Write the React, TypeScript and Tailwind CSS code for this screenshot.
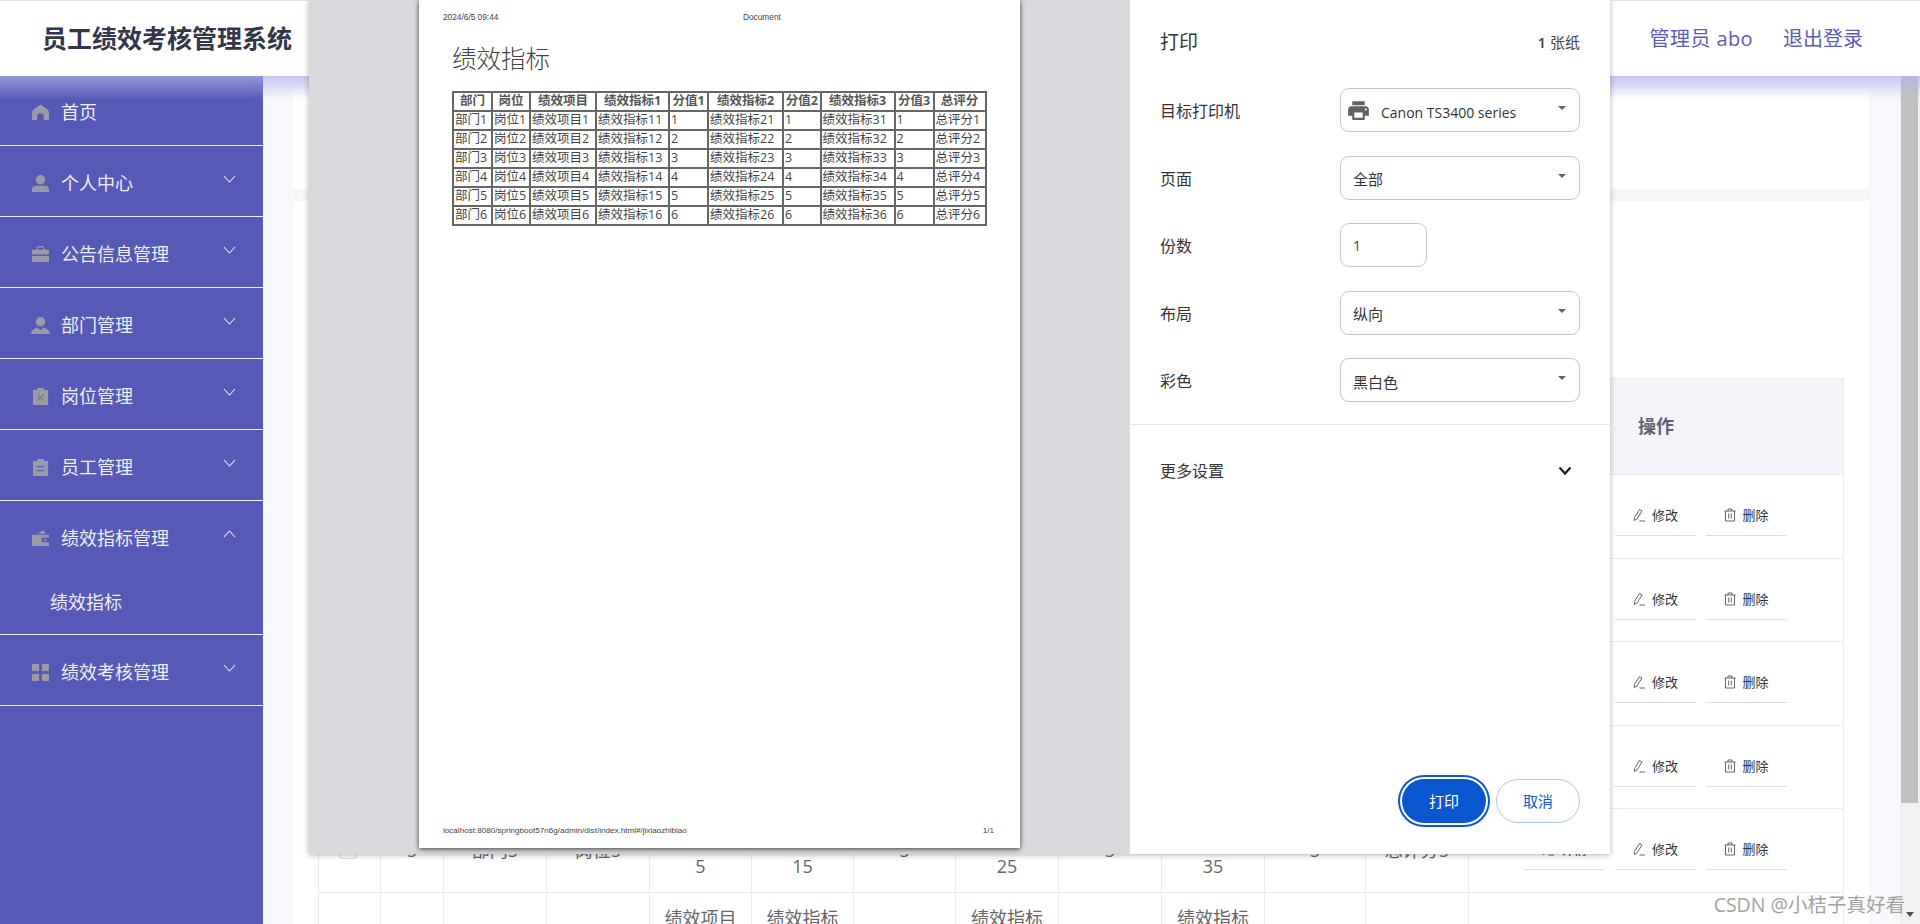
import type { ReactNode } from "react";

const ICON_GRAY = "#9a9ba6";
const rowCols =
  "grid grid-cols-[62px_63px_103px_103px_102px_102px_102px_103px_103px_103px_101px_103px_376px]";

function Chevron({ up }: { up?: boolean }) {
  return (
    <svg width="13" height="8" viewBox="0 0 13 8" fill="none" className="mb-[8px]">
      <path
        d={up ? "M1 7l5.5-6L12 7" : "M1 1l5.5 6L12 1"}
        stroke="#e8e8f6"
        strokeWidth="1.1"
      />
    </svg>
  );
}

const menuIcons: Record<string, ReactNode> = {
  home: <path d="M9 0.5 C7 2 2 5 1 6.5 C0.4 7.3 0 8 0 9 V17 H5.5 V13 C5.5 11 7 9.8 9 9.8 C11 9.8 12.5 11 12.5 13 V17 H18 V9 C18 8 17.6 7.3 17 6.5 C16 5 11 2 9 0.5 Z" />,
  user: (
    <>
      <circle cx="9" cy="5" r="5" />
      <path d="M0 15 C0 12.5 3 11.5 5 11.5 H13 C15 11.5 18 12.5 18 15 V18 H0 Z" />
    </>
  ),
  case: (
    <>
      <path d="M5 5 V2 C5 .8 5.8 0 7 0 H11 C12.2 0 13 .8 13 2 V5 H11.6 V2 C11.6 1.6 11.4 1.4 11 1.4 H7 C6.6 1.4 6.4 1.6 6.4 2 V5 Z" />
      <path d="M0 4 H18 V9 H0 Z" />
      <path d="M0 10.5 H18 V17 H0 Z" />
    </>
  ),
  staff: (
    <>
      <circle cx="9" cy="5" r="5" />
      <path d="M-1 18 C-1 14 3 11.5 6 11 L9 14 L12 11 C15 11.5 19 14 19 18 Z" />
    </>
  ),
  clipX: (
    <>
      <path d="M1 2 H5.5 V0 H12.5 V2 H17 V18 H1 Z" />
      <path d="M6 7 L12 13 M12 7 L6 13" stroke="#5659b5" strokeWidth="1" fill="none" />
    </>
  ),
  clipList: (
    <>
      <path d="M1 2 H5.5 V0 H12.5 V2 H17 V18 H1 Z" />
      <path d="M5 8 H13 M5 12.5 H13" stroke="#5659b5" strokeWidth="1.2" fill="none" />
    </>
  ),
  wallet: (
    <>
      <path d="M6 4 L12 0 L14.5 4 Z" />
      <path d="M0 5 H18 V8 H13 C10.5 8 10 9.5 10 10.5 C10 11.5 10.5 13 13 13 H18 V17 H0 Z" />
      <circle cx="14" cy="10.5" r="1" />
    </>
  ),
  grid: (
    <>
      <rect x="0" y="0" width="7.5" height="7.5" />
      <rect x="10.5" y="0" width="7.5" height="7.5" />
      <rect x="0" y="10.5" width="7.5" height="7.5" />
      <rect x="10.5" y="10.5" width="7.5" height="7.5" />
    </>
  ),
};

const menus = [
  { label: "首页", icon: "home" },
  { label: "个人中心", icon: "user", arrow: true },
  { label: "公告信息管理", icon: "case", arrow: true },
  { label: "部门管理", icon: "staff", arrow: true },
  { label: "岗位管理", icon: "clipX", arrow: true },
  { label: "员工管理", icon: "clipList", arrow: true },
  { label: "绩效指标管理", icon: "wallet", arrow: true, open: true, sub: "绩效指标" },
  { label: "绩效考核管理", icon: "grid", arrow: true },
];

function Sidebar() {
  return (
    <aside className="w-[263px] shrink-0 bg-[#5659b5] text-[18px] text-[#eeeef8]">
      {menus.map((m, i) => (
        <div key={m.label} className="border-b border-[#f2f2fa]">
          <div
            className={`flex items-center pl-[32px] pr-[27px] ${i === 0 ? "h-[69px] pt-[3px]" : "h-[70px] pt-[4px]"}`}
          >
            <svg width="17" height="17" viewBox="0 0 18 18" fill={ICON_GRAY} className="shrink-0 overflow-visible">
              {menuIcons[m.icon]}
            </svg>
            <span className="ml-[12px] flex-1">{m.label}</span>
            {m.arrow && <Chevron up={m.open} />}
          </div>
          {m.sub && (
            <div className="flex h-[63px] items-center pb-[1px] pl-[50px]">{m.sub}</div>
          )}
        </div>
      ))}
    </aside>
  );
}

function EditIcon() {
  return (
    <svg width="13" height="14" viewBox="0 0 13 14" fill="none" stroke="#555" strokeWidth="0.9">
      <path d="M1.5 9.5 L6.5 1.5 L9 3 L4 11 L1.2 12.5 Z" />
      <path d="M6.5 13 H12" />
    </svg>
  );
}

function TrashIcon() {
  return (
    <svg width="12" height="14" viewBox="0 0 12 14" fill="none" stroke="#555" strokeWidth="0.9">
      <path d="M0.5 3 H11.5 M4 3 V1 H8 V3 M1.5 3 V13 H10.5 V3 M4.7 5.5 V10.5 M7.3 5.5 V10.5" />
    </svg>
  );
}

function RowButton({ icon, label }: { icon: ReactNode; label: string }) {
  return (
    <div className="flex h-[40px] w-[81px] items-center justify-center gap-[6px] border-b border-[#dcdde0] pb-[1px] text-[13px] text-[#333]">
      {icon}
      <span>{label}</span>
    </div>
  );
}

function TableRow({ n }: { n: number }) {
  const cells = [
    n,
    `部门${n}`,
    `岗位${n}`,
    `绩效项目${n}`,
    `绩效指标1${n}`,
    n,
    `绩效指标2${n}`,
    n,
    `绩效指标3${n}`,
    n,
    `总评分${n}`,
  ];
  return (
    <div className={`${rowCols} h-[83.5px] border-b border-[#eaebee] text-[18px] leading-[32px] text-[#666]`}>
      <div className="flex items-center justify-center border-r border-[#eaebee] pr-[4px]">
        <div className="size-[18px] rounded-[3px] border border-[#dcdfe6] bg-white" />
      </div>
      {cells.map((c, i) => (
        <div
          key={i}
          className="flex items-center justify-center border-r border-[#eaebee] px-[14px] text-center"
        >
          {c}
        </div>
      ))}
      <div className="flex items-center justify-center gap-[10px] pr-[3px]">
        <RowButton icon={<EditIcon />} label="详情" />
        <RowButton icon={<EditIcon />} label="修改" />
        <RowButton icon={<TrashIcon />} label="删除" />
      </div>
    </div>
  );
}

function DataTable() {
  return (
    <div className="w-[1526px] border-x border-[#eaebee]">
      <div className={`${rowCols} h-[97px] border-y border-[#eaebee] bg-[#f4f5f8] text-[18px] font-bold text-[#5e5f78]`}>
        <div />
        {["序号", "部门", "岗位", "绩效项目", "绩效指标1", "分值1", "绩效指标2", "分值2", "绩效指标3", "分值3", "总评分"].map((h) => (
          <div key={h} className="flex items-center justify-center text-center">
            {h}
          </div>
        ))}
        <div className="flex items-center justify-center pr-[2px]">操作</div>
      </div>
      {[1, 2, 3, 4, 5, 6].map((n) => (
        <TableRow key={n} n={n} />
      ))}
    </div>
  );
}

const printCols = [39, 38, 66, 73, 39, 75, 37.5, 74, 39, 52];
const printHead = ["部门", "岗位", "绩效项目", "绩效指标1", "分值1", "绩效指标2", "分值2", "绩效指标3", "分值3", "总评分"];

function PaperPreview() {
  return (
    <div className="flex h-[848px] w-[601px] flex-col bg-white px-[24px] text-[#444] shadow-[0_1px_5px_rgba(0,0,0,0.75)]">
      <div className="flex h-[34px] items-center font-['Liberation_Sans',sans-serif] text-[8.3px] leading-none">
        <span className="w-[300px]">2024/6/5 09:44</span>
        <span>Document</span>
      </div>
      <h1 className="ml-[9px] mt-[7px] h-[50px] text-[24.5px] font-light leading-[36px] text-[#444]">绩效指标</h1>
      <table className="ml-[9px] w-[532px] table-fixed border-collapse text-[12.5px] leading-none">
        <colgroup>
          {printCols.map((w, i) => (
            <col key={i} style={{ width: w }} />
          ))}
        </colgroup>
        <thead>
          <tr className="h-[19px]">
            {printHead.map((h) => (
              <th key={h} className="whitespace-nowrap border-2 border-[#666] p-0 text-center font-bold text-[#555]">
                {h}
              </th>
            ))}
          </tr>
        </thead>
        <tbody>
          {[1, 2, 3, 4, 5, 6].map((n) => (
            <tr key={n} className="h-[19px]">
              {[`部门${n}`, `岗位${n}`, `绩效项目${n}`, `绩效指标1${n}`, n, `绩效指标2${n}`, n, `绩效指标3${n}`, n, `总评分${n}`].map((c, i) => (
                <td key={i} className="whitespace-nowrap border-2 border-[#666] p-0 pl-px font-normal">
                  {c}
                </td>
              ))}
            </tr>
          ))}
        </tbody>
      </table>
      <div className="mb-[13px] mt-auto flex justify-between font-['Liberation_Sans',sans-serif] text-[8.1px] leading-none">
        <span>localhost:8080/springboot57n6g/admin/dist/index.html#/jixiaozhibiao</span>
        <span className="mr-[2px]">1/1</span>
      </div>
    </div>
  );
}

function Caret() {
  return <span className="mb-[4px] size-0 border-x-[4px] border-t-[4px] border-x-transparent border-t-[#5f6368]" />;
}

function SettingRow({ label, children }: { label: string; children: ReactNode }) {
  return (
    <div className="flex h-[44px] items-center">
      <span className="w-[180px] shrink-0 pt-[2px] text-[16px] text-[#333]">{label}</span>
      {children}
    </div>
  );
}

function SelectBox({ text, icon }: { text: string; icon?: ReactNode }) {
  return (
    <div className="flex h-[44px] w-[240px] items-center rounded-[9px] border border-[#c4c7c9] pl-[12px] pr-[13px] text-[15px] text-[#333]">
      {icon}
      <span className={`flex-1 pt-[4px] ${icon ? "text-[14px]" : ""}`}>{text}</span>
      <Caret />
    </div>
  );
}

function PrintPanel() {
  return (
    <div className="flex min-w-0 flex-1 flex-col bg-white">
      <div className="mb-[4px] flex h-[84px] items-center justify-between px-[30px]">
        <span className="text-[19px] text-[#333]">打印</span>
        <span className="text-[15px] text-[#444]">
          <b className="font-semibold">1</b> 张纸
        </span>
      </div>
      <div className="flex flex-col gap-[23.5px] px-[30px]">
        <SettingRow label="目标打印机">
          <SelectBox
            text="Canon TS3400 series"
            icon={
              <svg width="25" height="25" viewBox="0 0 24 24" fill="#5f6368" className="-ml-[7px] mr-[10px] shrink-0">
                <path d="M19 8H5c-1.66 0-3 1.34-3 3v6h4v4h12v-4h4v-6c0-1.66-1.34-3-3-3zm-3 11H8v-5h8v5zm3-7c-.55 0-1-.45-1-1s.45-1 1-1 1 .45 1 1-.45 1-1 1zm-1-9H6v4h12V3z" />
              </svg>
            }
          />
        </SettingRow>
        <SettingRow label="页面">
          <SelectBox text="全部" />
        </SettingRow>
        <SettingRow label="份数">
          <div className="flex h-[44px] w-[87px] items-center rounded-[9px] border border-[#c4c7c9] pl-[12px] text-[14px] text-[#444]">
            1
          </div>
        </SettingRow>
        <SettingRow label="布局">
          <SelectBox text="纵向" />
        </SettingRow>
        <SettingRow label="彩色">
          <SelectBox text="黑白色" />
        </SettingRow>
      </div>
      <div className="mt-[22px] border-b border-[#e6e6e6]" />
      <div className="flex h-[92px] items-center justify-between pl-[30px] pr-[38px] text-[16px] text-[#333]">
        <span>更多设置</span>
        <svg width="14" height="10" viewBox="0 0 14 10" fill="none" stroke="#1f1f1f" strokeWidth="2.2">
          <path d="M1.5 1.5L7 7.5l5.5-6" />
        </svg>
      </div>
      <div className="mb-[31px] mr-[30px] mt-auto flex justify-end gap-[10px] text-[15px]">
        <button className="h-[44px] w-[84px] rounded-full bg-[#0b57d0] text-white shadow-[0_0_0_2px_#fff,0_0_0_4px_#0b57d0]">
          打印
        </button>
        <button className="h-[44px] w-[84px] rounded-full border border-[#a8c7fa] text-[#0b57d0]">取消</button>
      </div>
    </div>
  );
}

export default function App() {
  return (
    <div className="relative flex h-[924px] w-[1920px] flex-col overflow-hidden bg-[#f7f8fb] font-['Open_Sans','Noto_Sans_CJK_SC',sans-serif]">
      <header className="flex h-[76px] shrink-0 items-center border-t border-[#e2e2e2] bg-white pl-[42px] pr-[57px]">
        <span className="flex-1 text-[25px] font-bold text-[#33354a]">员工绩效考核管理系统</span>
        <div className="flex gap-[30px] text-[20px] text-[#5b5eb0]">
          <span className="tracking-[0.4px]">管理员 abo</span>
          <span>退出登录</span>
        </div>
      </header>
      <div className="absolute left-0 right-0 top-[76px] z-10 h-[24px] bg-gradient-to-b from-[rgba(176,177,240,0.7)] to-transparent" />

      <div className="flex min-h-0 flex-1">
        <Sidebar />
        <main className="flex min-w-0 flex-1 flex-col overflow-hidden pl-[30px] pr-[31px] pt-[13px]">
          <div className="h-[112px] shrink-0 border-b-[12px] border-[#f5f6f8] bg-white" />
          <div className="flex-1 bg-white px-[25px] pt-[177px]">
            <DataTable />
          </div>
        </main>
        <div className="w-[20px] shrink-0 bg-[#f1f1f1]">
          <div className="ml-[1px] h-[727px] w-[17px] bg-[#c1c1c1]" />
        </div>
      </div>

      <div className="absolute left-[309px] top-0 z-20 flex h-[854px] w-[1301px] shadow-[0_1px_6px_rgba(0,0,0,0.3)]">
        <div className="w-[821px] shrink-0 bg-[#d9dadd] pl-[110px]">
          <PaperPreview />
        </div>
        <PrintPanel />
      </div>

      <div className="absolute bottom-[5px] right-[15px] z-30 text-[19.5px] leading-[28px] text-[#a3a3a3]">
        CSDN @小桔子真好看
      </div>
      <span className="absolute bottom-[7px] right-[6px] z-30 size-0 border-x-[4px] border-t-[5px] border-x-transparent border-t-[#505050]" />
    </div>
  );
}
